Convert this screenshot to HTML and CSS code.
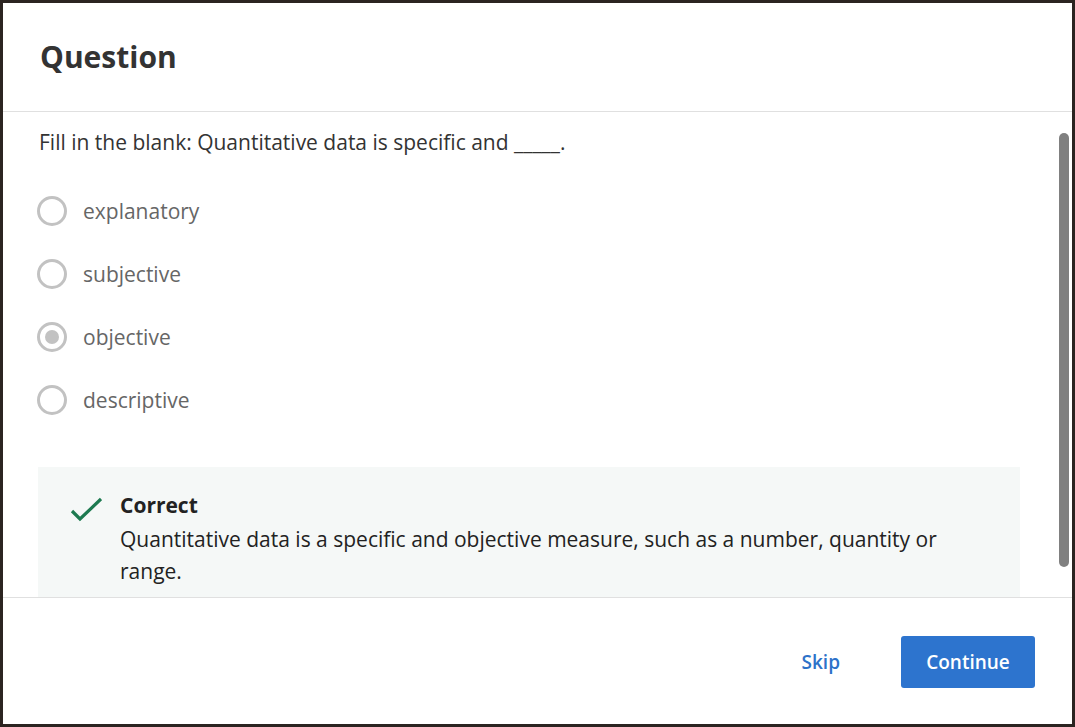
FILE: index.html
```html
<!DOCTYPE html>
<html lang="en">
<head>
<meta charset="utf-8">
<title>Question</title>
<link rel="stylesheet" href="styles.css">
</head>
<body>
<div class="modal">
  <header class="modal-header">
    <h1 class="modal-title">Question</h1>
  </header>
  <div class="modal-body">
    <div class="content">
      <p class="prompt">Fill in the blank: Quantitative data is specific and _____.</p>
      <ul class="options">
        <li class="option"><span class="radio"></span><span class="option-label">explanatory</span></li>
        <li class="option"><span class="radio"></span><span class="option-label">subjective</span></li>
        <li class="option"><span class="radio selected"><span class="dot"></span></span><span class="option-label">objective</span></li>
        <li class="option"><span class="radio"></span><span class="option-label">descriptive</span></li>
      </ul>
      <div class="feedback">
        <svg class="check" width="32" height="32" viewBox="0 0 32 32" aria-hidden="true">
          <polyline points="2,18 10,26 31,6" fill="none" stroke="#1d7a50" stroke-width="3.2"/>
        </svg>
        <div class="feedback-text">
          <div class="feedback-title">Correct</div>
          <div class="feedback-desc">Quantitative data is a specific and objective measure, such as a number, quantity or range.</div>
        </div>
      </div>
    </div>
    <div class="scrollbar"><div class="thumb"></div></div>
  </div>
  <footer class="modal-footer">
    <button class="btn-skip">Skip</button>
    <button class="btn-continue">Continue</button>
  </footer>
</div>
</body>
</html>
```

FILE: styles.css
```css
html, body {
  margin: 0;
  padding: 0;
}
body {
  background: #2b2421;
  height: 727px;
  overflow: hidden;
  font-family: "Open Sans", "Liberation Sans", sans-serif;
}
.modal {
  margin: 3px;
  width: 1069px;
  height: 721px;
  background: #ffffff;
  display: flex;
  flex-direction: column;
}
.modal-header {
  height: 108px;
  flex: none;
  display: flex;
  align-items: center;
  padding-left: 37px;
  border-bottom: 1px solid #e0e0e0;
}
.modal-title {
  margin: 0;
  font-size: 30px;
  font-weight: 700;
  color: #333333;
  line-height: 38px;
}
.modal-body {
  flex: 1;
  display: flex;
  min-height: 0;
  overflow: hidden;
}
.content {
  flex: 1;
  padding: 15px 33px 0 34px;
  overflow: hidden;
}
.prompt {
  margin: 0;
  padding-left: 2px;
  font-size: 21px;
  line-height: 30px;
  color: #333333;
}
.options {
  list-style: none;
  margin: 22px 0 0;
  padding: 0;
}
.option {
  height: 63px;
  display: flex;
  align-items: center;
}
.radio {
  width: 30px;
  height: 30px;
  box-sizing: border-box;
  border: 3px solid #c2c2c2;
  border-radius: 50%;
  flex: none;
  display: flex;
  align-items: center;
  justify-content: center;
}
.dot {
  width: 14px;
  height: 14px;
  border-radius: 50%;
  background: #c2c2c2;
}
.option-label {
  margin-left: 16px;
  font-size: 21px;
  line-height: 30px;
  color: #666666;
}
.feedback {
  margin-top: 36px;
  margin-left: 1px;
  background: #f5f8f7;
  display: flex;
  align-items: flex-start;
  padding: 22px 32px 40px 32px;
}
.check {
  flex: none;
  margin-top: 4px;
  display: block;
}
.feedback-text {
  margin-left: 18px;
  color: #222222;
}
.feedback-title {
  font-size: 21px;
  font-weight: 700;
  line-height: 32px;
}
.feedback-desc {
  margin-top: 2px;
  font-size: 21px;
  line-height: 32px;
}
.scrollbar {
  flex: none;
  width: 19px;
  padding: 21px 3px 0 6px;
  box-sizing: border-box;
}
.thumb {
  width: 10px;
  height: 434px;
  border-radius: 5px;
  background: #808080;
}
.modal-footer {
  flex: none;
  height: 127px;
  border-top: 1px solid #e0e0e0;
  display: flex;
  align-items: center;
  justify-content: flex-end;
  padding: 2px 37px 0 0;
  box-sizing: border-box;
  gap: 37px;
}
.btn-skip {
  font-family: inherit;
  font-size: 19px;
  font-weight: 600;
  color: #2d72c9;
  background: none;
  border: none;
  padding: 12px 24px;
  cursor: pointer;
}
.btn-continue {
  font-family: inherit;
  font-size: 19px;
  font-weight: 600;
  color: #ffffff;
  background: #2d74ce;
  border: none;
  border-radius: 3px;
  width: 134px;
  height: 52px;
  cursor: pointer;
}
```
